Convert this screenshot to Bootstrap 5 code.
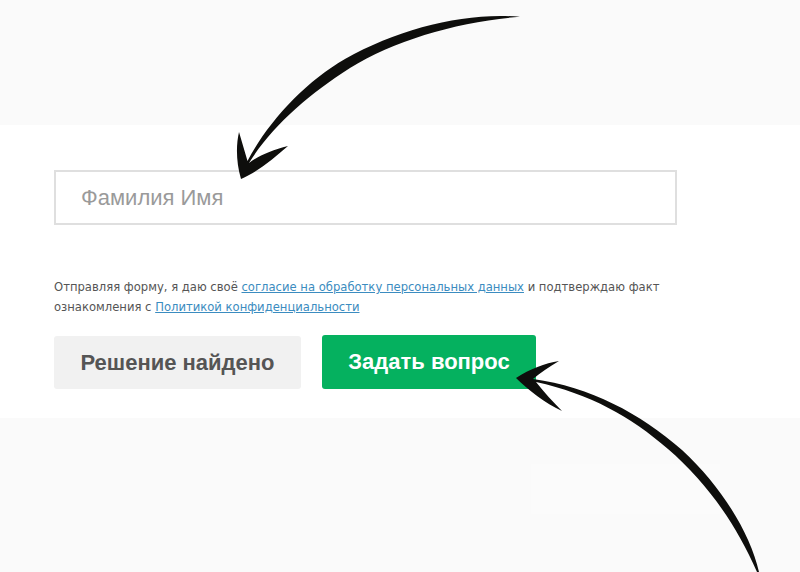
<!DOCTYPE html>
<html lang="ru">
<head>
<meta charset="utf-8">
<title>Форма</title>
<link href="https://cdn.jsdelivr.net/npm/bootstrap@5.3.0/dist/css/bootstrap.min.css" rel="stylesheet">
<style>
html,body{height:100%;}
body{background:#fafafa;font-family:"Liberation Sans",Arial,sans-serif;overflow:hidden;}
.stage{position:relative;width:800px;height:572px;}
.top-gap{height:125px;}
.panel{background:#fff;height:293px;padding:45px 123px 0 54px;}
.name-input.form-control{height:55px;border:2px solid #dfdfdf;border-radius:0;padding:0 25px;font-family:"Liberation Sans",Arial,sans-serif;font-size:22px;color:#555;background:#fff;}
.name-input.form-control::placeholder{color:#9a9a9a;opacity:1;}
.consent{margin:52px 0 0;font-family:"DejaVu Sans",sans-serif;font-size:11.6px;line-height:20px;color:#555;width:623px;}
.consent a{color:#3b8cc0;}
.action-row{margin-top:18px;gap:21px;}
.act-btn{font-size:22px;font-weight:700;border:0;border-radius:3px;line-height:1;padding:0;}
.act-muted{background:#f1f1f1;color:#555;width:247px;height:53px;margin-top:1px;}
.act-go{background:#05b15f;color:#fff;width:214px;height:54px;}
.act-go:hover{background:#05b15f;color:#fff;}
.act-muted:hover{background:#f1f1f1;color:#555;}
.bottom-part{padding:46px 0 0 531px;}
.faint-box{width:189px;height:50px;background:#fbfbfb;}
.arrows{position:absolute;left:0;top:0;width:800px;height:572px;pointer-events:none;}
</style>
</head>
<body>
<div class="stage">
  <div class="top-gap"></div>
  <div class="panel">
    <input class="form-control name-input" type="text" placeholder="Фамилия Имя">
    <p class="consent">Отправляя форму, я даю своё <a href="#">согласие на обработку персональных данных</a> и подтверждаю факт ознакомления с <a href="#">Политикой конфиденциальности</a></p>
    <div class="d-flex align-items-start action-row">
      <button type="button" class="btn act-btn act-muted">Решение найдено</button>
      <button type="button" class="btn act-btn act-go">Задать вопрос</button>
    </div>
  </div>
  <div class="bottom-part"><div class="faint-box"></div></div>
  <svg class="arrows" viewBox="0 0 800 572" aria-hidden="true">
    <path fill="#0e0e0c" d="M520 16.8C465 12 400 28 345 59C305 82 268 122 247.5 161L239 132C236 145 236 162 241 179C258 172 274 158 288 146C272 150 258 156 249 163C272 126 308 95 350 68C395 40 460 21 520 16.8Z"/>
    <path fill="#0e0e0c" d="M516 378C530 369 545 363 559 361C549 367 540 373 533 379C590 387 640 413 682 450C722 487 750 533 759 572L757 572C735 522 706 482 668 449C630 416 590 394 536 382C544 392 553 402 562 411C545 403 528 390 516 378Z"/>
  </svg>
</div>
<script src="https://cdn.jsdelivr.net/npm/bootstrap@5.3.0/dist/js/bootstrap.bundle.min.js"></script>
</body>
</html>
